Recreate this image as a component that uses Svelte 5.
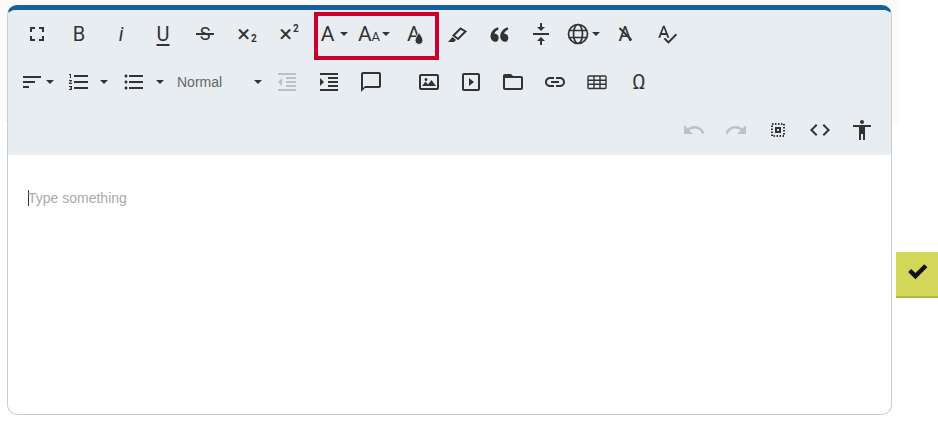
<script lang="ts">
	const paths = {
		fullscreen: 'M7 14H5v5h5v-2H7v-3zm-2-4h2V7h3V5H5v5zm12 7h-3v2h5v-5h-2v3zM14 5v2h3v3h2V5h-5z',
		split: 'M8 19h3v4h2v-4h3l-4-4-4 4zm8-14h-3V1h-2v4H8l4 4 4-4zM4 11v2h16v-2H4z',
		spell: 'M12.45 16h2.09L9.43 3H7.57L2.46 16h2.09l1.12-3h5.64l1.14 3zm-6.02-5L8.5 5.48 10.57 11H6.43zm15.16.59l-8.09 8.09L9.83 16l-1.41 1.41 5.09 5.09L23 13l-1.41-1.41z',
		align: 'M3 6h18v2H3zM3 11h12v2H3zM3 16h6v2H3z',
		ol: 'M2 17h2v.5H3v1h1v.5H2v1h3v-4H2v1zm1-9h1V4H2v1h1v3zm-1 3h1.8L2 13.1v.9h3v-1H3.2L5 10.9V10H2v1zm5-6v2h14V5H7zm0 14h14v-2H7v2zm0-6h14v-2H7v2z',
		ul: 'M4 10.5c-.83 0-1.5.67-1.5 1.5s.67 1.5 1.5 1.5 1.5-.67 1.5-1.5-.67-1.5-1.5-1.5zm0-6c-.83 0-1.5.67-1.5 1.5S3.17 7.5 4 7.5 5.5 6.83 5.5 6 4.83 4.5 4 4.5zm0 12c-.83 0-1.5.68-1.5 1.5s.68 1.5 1.5 1.5 1.5-.68 1.5-1.5-.67-1.5-1.5-1.5zM7 19h14v-2H7v2zm0-6h14v-2H7v2zm0-8v2h14V5H7z',
		outdent: 'M11 17h10v-2H11v2zm-8-5l4 4V8l-4 4zm0 9h18v-2H3v2zM3 3v2h18V3H3zm8 6h10V7H11v2zm0 4h10v-2H11v2z',
		indent: 'M3 21h18v-2H3v2zM3 8v8l4-4-4-4zm8 9h10v-2H11v2zM3 3v2h18V3H3zm8 6h10V7H11v2zm0 4h10v-2H11v2z',
		comment: 'M20 2H4c-1.1 0-2 .9-2 2v18l4-4h14c1.1 0 2-.9 2-2V4c0-1.1-.9-2-2-2zm0 14H6l-2 2V4h16v12z',
		folder: 'M20 6h-8l-2-2H4c-1.1 0-1.99.9-1.99 2L2 18c0 1.1.9 2 2 2h16c1.1 0 2-.9 2-2V8c0-1.1-.9-2-2-2zm0 12H4V8h16v10z',
		link: 'M3.9 12c0-1.71 1.39-3.1 3.1-3.1h4V7H7c-2.76 0-5 2.24-5 5s2.24 5 5 5h4v-1.9H7c-1.71 0-3.1-1.39-3.1-3.1zM8 13h8v-2H8v2zm9-6h-4v1.9h4c1.71 0 3.1 1.39 3.1 3.1s-1.39 3.1-3.1 3.1h-4V17h4c2.76 0 5-2.24 5-5s-2.24-5-5-5z',
		undo: 'M12.5 8c-2.65 0-5.05.99-6.9 2.6L2 7v9h9l-3.62-3.62c1.39-1.16 3.16-1.88 5.12-1.88 3.54 0 6.55 2.31 7.6 5.5l2.37-.78C21.08 11.03 17.15 8 12.5 8z',
		redo: 'M18.4 10.6C16.55 8.99 14.15 8 11.5 8c-4.65 0-8.58 3.03-9.96 7.22L3.9 16c1.05-3.19 4.05-5.5 7.6-5.5 1.95 0 3.73.72 5.12 1.88L13 16h9V7l-3.6 3.6z',
		code: 'M9.4 16.6L4.8 12l4.6-4.6L8 6l-6 6 6 6 1.4-1.4zm5.2 0l4.6-4.6-4.6-4.6L16 6l6 6-6 6-1.4-1.4z',
		a11y: 'M12 2c1.1 0 2 .9 2 2s-.9 2-2 2-2-.9-2-2 .9-2 2-2zm9 7h-6v13h-2v-6h-2v6H9V9H3V7h18v2z',
		quote: 'M10.5 17.5c-2.6 0-4.5-1.9-4.5-4.4 0-3.4 2.2-6.1 6-7.6l.8 1.6c-1.9.9-3.2 2.1-3.6 3.5 2 .1 3.5 1.6 3.5 3.4 0 2-1 3.5-2.2 3.5zM18.5 17.5c-2.6 0-4.5-1.9-4.5-4.4 0-3.4 2.2-6.1 6-7.6l.8 1.6c-1.9.9-3.2 2.1-3.6 3.5 2 .1 3.5 1.6 3.5 3.4 0 2-1 3.5-2.2 3.5z'
	};
</script>

{#snippet icon(d: string)}
	<svg class="icon" viewBox="0 0 24 24"><path {d} /></svg>
{/snippet}

{#snippet caret()}
	<span class="caret"></span>
{/snippet}

<div class="page">
	<div class="backdrop"></div>

	<div class="editor">
		<div class="toolbar">
			<div class="row">
				<button class="btn">{@render icon(paths.fullscreen)}</button>
				<button class="btn glyph">B</button>
				<button class="btn glyph ital">i</button>
				<button class="btn glyph under">U</button>
				<button class="btn glyph strike">S</button>
				<button class="btn glyph script">×<sub>2</sub></button>
				<button class="btn glyph script">×<sup>2</sup></button>
				<button class="btn glyph letter font-color">A{@render caret()}</button>
				<button class="btn glyph letter font-size">A<small>A</small>{@render caret()}</button>
				<button class="btn glyph letter drop-btn">
					A
					<svg class="drop" viewBox="0 0 10 14"><path d="M5 0c1 3 4 5 4 8.500a4 4 0 0 1-8 0C1 5 4 3 5 0z" /></svg>
				</button>
				<button class="btn">
					<svg class="icon marker" viewBox="0 0 24 24">
						<path class="pen" d="M8.500 13.500l7-7 5 3-7.500 7.500z" />
						<path d="M7.500 15l3.500 3-2 2H3z" />
					</svg>
				</button>
				<button class="btn">
					<svg class="icon quote" viewBox="1.400 -0.500 24 24"><path d={paths.quote} /></svg>
				</button>
				<button class="btn">{@render icon(paths.split)}</button>
				<button class="btn">
					<svg class="icon globe" viewBox="0 0 24 24">
						<circle cx="12" cy="12" r="9.500" />
						<ellipse cx="12" cy="12" rx="4.500" ry="9.500" />
						<path d="M3 8.500h18M3 15.500h18" />
					</svg>
					{@render caret()}
				</button>
				<button class="btn clear">
					<span class="glyph clear-a">A</span>
					<span class="slash"></span>
				</button>
				<button class="btn spell">{@render icon(paths.spell)}</button>
			</div>

			<div class="row">
				<button class="btn">{@render icon(paths.align)}{@render caret()}</button>
				<button class="btn list ol">{@render icon(paths.ol)}{@render caret()}</button>
				<button class="btn list ul">{@render icon(paths.ul)}{@render caret()}</button>
				<button class="select">Normal{@render caret()}</button>
				<button class="btn off">{@render icon(paths.outdent)}</button>
				<button class="btn">{@render icon(paths.indent)}</button>
				<button class="btn">{@render icon(paths.comment)}</button>
				<span class="sep"></span>
				<button class="btn">
					<svg class="icon" viewBox="0 0 24 24">
						<path d="M4 4h16a2 2 0 0 1 2 2v12a2 2 0 0 1-2 2H4a2 2 0 0 1-2-2V6a2 2 0 0 1 2-2zm0 2v12h16V6H4zm1 10l3.500-4.500 2.500 3 3.500-4.500 4.500 6H5zm2.500-6.500a1.500 1.500 0 1 0 0-.01z" fill-rule="evenodd" />
					</svg>
				</button>
				<button class="btn">
					<svg class="icon" viewBox="0 0 24 24">
						<path d="M5 3h14a2 2 0 0 1 2 2v14a2 2 0 0 1-2 2H5a2 2 0 0 1-2-2V5a2 2 0 0 1 2-2zm0 2v14h14V5H5zm5 3l5 4-5 4V8z" fill-rule="evenodd" />
					</svg>
				</button>
				<button class="btn">{@render icon(paths.folder)}</button>
				<button class="btn">{@render icon(paths.link)}</button>
				<button class="btn">
					<svg class="icon table" viewBox="0 0 24 24">
						<rect x="3" y="6" width="18" height="12.500" rx="1" />
						<path d="M3 10.200h18M3 14.300h18M9 6v12.500M15 6v12.500" />
					</svg>
				</button>
				<button class="btn glyph omega">Ω</button>
			</div>

			<div class="row end">
				<button class="btn off">{@render icon(paths.undo)}</button>
				<button class="btn off">{@render icon(paths.redo)}</button>
				<button class="btn">
					<svg class="icon select-all" viewBox="0 0 24 24">
						<rect class="dots" x="6" y="6" width="12" height="12" />
						<rect class="core" x="10" y="10" width="4" height="4" />
					</svg>
				</button>
				<button class="btn">{@render icon(paths.code)}</button>
				<button class="btn">{@render icon(paths.a11y)}</button>
			</div>

			<div class="highlight"></div>
		</div>

		<div class="content">
			<span class="placeholder">Type something</span>
		</div>
	</div>

	<button class="save" aria-label="Save">
		<svg viewBox="0 0 24 24"><path d="M3 12.500l3-3 4 4L18.500 5l3 3L10 19.500z" /></svg>
	</button>
</div>

<style>
	:global(body) {
		background: #fff;
		overflow: hidden;
	}

	.page {
		position: relative;
		display: flex;
		align-items: flex-start;
		height: 422px;
		padding: 5px 0 0 7px;
		box-sizing: border-box;
		font-family: "Liberation Sans", Arial, sans-serif;
	}

	.backdrop {
		position: absolute;
		left: 0;
		top: 0;
		width: 900px;
		height: 122px;
		background: #fafafa;
	}

	.editor {
		position: relative;
		width: 885px;
		height: 410px;
		box-sizing: border-box;
		display: flex;
		flex-direction: column;
		background: #fff;
		border: 1px solid #ccc;
		border-top: 5px solid #14619d;
		border-radius: 10px;
		overflow: hidden;
	}

	.toolbar {
		position: relative;
		padding: 0 8px 1px;
		background: #e8edf1;
	}

	.row {
		display: flex;
		align-items: center;
		height: 48px;
	}

	.row.end {
		justify-content: flex-end;
	}

	.btn {
		position: relative;
		display: flex;
		align-items: center;
		justify-content: center;
		width: 42px;
		height: 48px;
		padding: 0;
		flex: none;
		border: 0;
		background: none;
		color: #333;
		fill: #333;
		font-family: Roboto, sans-serif;
	}

	.icon {
		flex: none;
		width: 24px;
		height: 24px;
		fill: inherit;
	}

	.off .icon {
		fill: #bcc1c5;
	}

	.globe,
	.table {
		fill: none;
		stroke: #333;
		stroke-width: 1.700;
	}

	.table {
		stroke-width: 1.400;
	}

	.marker .pen {
		fill: none;
		stroke: #333;
		stroke-width: 2;
	}

	.quote {
		width: 29px;
		height: 29px;
	}

	.spell .icon {
		width: 22px;
		height: 22px;
	}

	.select-all .dots {
		fill: none;
		stroke: #333;
		stroke-width: 2;
		stroke-dasharray: 1.500 1.500;
	}

	.select-all .core {
		fill: #e8edf1;
		stroke: #333;
		stroke-width: 2;
	}

	.caret {
		flex: none;
		width: 0;
		height: 0;
		margin-left: 2px;
		border: 4px solid transparent;
		border-top-color: #333;
		border-bottom: 0;
	}

	.glyph {
		font-family: Roboto, sans-serif;
		font-size: 20px;
		line-height: 1;
	}

	.ital {
		font-style: italic;
	}

	.under {
		text-decoration: underline;
		text-decoration-thickness: 2px;
		text-underline-offset: 3px;
	}

	.strike {
		font-size: 18px;
	}

	.strike::after {
		content: "";
		position: absolute;
		left: 12px;
		top: 23px;
		width: 18px;
		height: 2px;
		background: #333;
	}

	.script {
		font-size: 24px;
	}

	sub,
	sup {
		font-size: 10px;
		font-weight: 700;
		line-height: 0;
		margin-left: 1px;
	}

	sub {
		margin-top: 10px;
	}

	sup {
		margin-top: -10px;
	}

	.letter {
		font-size: 21px;
	}

	.letter small {
		font-size: 13px;
		align-self: center;
		margin-top: 4px;
	}

	.font-color {
		padding-left: 7px;
	}

	.font-color .caret {
		margin-left: 6px;
	}

	.font-size {
		padding-left: 2px;
	}

	.drop-btn {
		justify-content: flex-start;
		padding-left: 13px;
	}

	.drop {
		flex: none;
		width: 10px;
		height: 14px;
		margin-left: -7px;
		margin-top: 10px;
		fill: #333;
		stroke: #e8edf1;
		stroke-width: 1;
	}

	.clear-a {
		font-size: 20px;
	}

	.clear .slash {
		position: absolute;
		left: 13px;
		top: 23px;
		width: 17px;
		height: 2px;
		background: #333;
		transform: rotate(45deg);
	}

	.list {
		justify-content: flex-start;
	}

	.ol {
		width: 55px;
		padding-left: 9px;
	}

	.ol .caret {
		margin-left: 9px;
	}

	.ul {
		width: 57px;
		padding-left: 9px;
	}

	.ul .caret {
		margin-left: 10px;
	}

	.select {
		display: flex;
		align-items: center;
		justify-content: space-between;
		width: 96px;
		height: 48px;
		flex: none;
		box-sizing: border-box;
		padding: 0 4px 0 7px;
		border: 0;
		background: none;
		color: #666;
		font-family: "Liberation Sans", Arial, sans-serif;
		font-size: 14px;
	}

	.sep {
		width: 16px;
		flex: none;
	}

	.highlight {
		position: absolute;
		left: 306px;
		top: 2px;
		width: 125px;
		height: 48px;
		box-sizing: border-box;
		border: 4px solid #c8002b;
	}

	.content {
		flex: 1;
		padding: 35px 20px;
		font-size: 14px;
	}

	.placeholder {
		display: inline-block;
		line-height: 16px;
		box-shadow: inset 1px 0 0 #333;
		color: #a9a9a9;
	}

	.save {
		display: flex;
		align-items: center;
		justify-content: center;
		width: 42px;
		height: 46px;
		flex: none;
		margin: 247px 0 0 4px;
		padding: 0 0 5px;
		border: 0;
		border-bottom: 2px solid #b5b84a;
		background: #d2d659;
	}

	.save svg {
		width: 25px;
		height: 25px;
		fill: #111;
	}
</style>
